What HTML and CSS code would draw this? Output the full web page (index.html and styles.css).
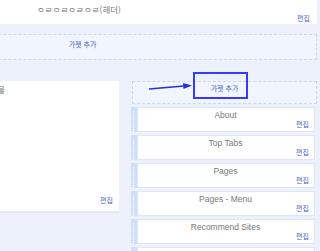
FILE: index.html
```html
<!DOCTYPE html>
<html lang="ko">
<head>
    <meta charset="UTF-8">
    <meta name="viewport" content="width=device-width, initial-scale=1.0">
    <title>레이아웃</title>
    <link rel="stylesheet" href="styles.css">
</head>
<body>

<div class="page">
    <div class="header-box">
        <div class="header-title">ㅇㄹㅇㄹㅇㄹㅇㄹ(헤더)</div>
        <a class="edit">편집</a>
    </div>

    <div class="add-area cross">
        <a class="add-link">가젯 추가</a>
    </div>

    <div class="columns">
        <div class="main-col">
            <div class="main-box">
                <div class="main-title">블로그 게시물</div>
                <a class="edit">편집</a>
            </div>
        </div>

        <div class="side-col">
            <div class="add-area side">
                <a class="add-link">가젯 추가</a>
                <span class="highlight"></span>
                <svg class="arrow" width="46" height="10" viewBox="0 0 46 10">
                    <line x1="1" y1="8" x2="36" y2="5" stroke="#2a2ee0" stroke-width="1.5"/>
                    <polygon points="35,2 44,4.5 35.5,8" fill="#2a2ee0"/>
                </svg>
            </div>

            <div class="widget">
                <div class="handle"></div>
                <div class="widget-box">
                    <div class="widget-title">About</div>
                    <a class="edit">편집</a>
                </div>
            </div>
            <div class="widget">
                <div class="handle"></div>
                <div class="widget-box">
                    <div class="widget-title">Top Tabs</div>
                    <a class="edit">편집</a>
                </div>
            </div>
            <div class="widget">
                <div class="handle"></div>
                <div class="widget-box">
                    <div class="widget-title">Pages</div>
                    <a class="edit">편집</a>
                </div>
            </div>
            <div class="widget">
                <div class="handle"></div>
                <div class="widget-box">
                    <div class="widget-title">Pages - Menu</div>
                    <a class="edit">편집</a>
                </div>
            </div>
            <div class="widget">
                <div class="handle"></div>
                <div class="widget-box">
                    <div class="widget-title">Recommend Sites</div>
                    <a class="edit">편집</a>
                </div>
            </div>
            <div class="widget">
                <div class="handle"></div>
                <div class="widget-box">
                    <div class="widget-title">Recent Comments</div>
                    <a class="edit">편집</a>
                </div>
            </div>
        </div>
    </div>
</div>

</body>
</html>
```

FILE: styles.css
```css
body {
    margin: 0;
    padding: 0;
    background-color: #ecf1fc;
    font-family: 'Liberation Sans', 'Noto Sans CJK KR', sans-serif;
    overflow: hidden;
    width: 320px;
    height: 251px;
}

.page {
    margin-left: -152px;
    width: 469px;
}

.edit {
    display: block;
    text-align: right;
    font-family: 'Noto Sans CJK KR', sans-serif;
    font-size: 7px;
    line-height: 9px;
    color: #4b5fc9;
    cursor: pointer;
}

.header-box {
    height: 24px;
    background-color: #ffffff;
    padding: 5px 7px 0 0;
    box-sizing: border-box;
}

.header-title {
    text-align: center;
    font-family: 'Noto Sans CJK KR', sans-serif;
    font-size: 8.5px;
    line-height: 9px;
    color: #777777;
}

.add-area {
    border: 1px dashed #cad6ee;
    background-color: #f1f5fd;
    box-sizing: border-box;
    text-align: center;
    font-family: 'Noto Sans CJK KR', sans-serif;
    font-size: 7px;
    line-height: 9px;
}

.add-area.cross {
    margin-top: 10px;
    height: 26px;
    padding-top: 5px;
}

.add-link {
    color: #4b5fc9;
    cursor: pointer;
}

.columns {
    display: flex;
    margin-top: 21px;
}

.main-col {
    width: 271px;
}

.main-box {
    height: 130px;
    background-color: #ffffff;
    box-shadow: 0 2px 0 #e2e9f6;
    padding: 3px 6px 0 0;
    box-sizing: border-box;
    display: flex;
    flex-direction: column;
}

.main-title {
    text-align: center;
    font-family: 'Noto Sans CJK KR', sans-serif;
    font-size: 8.5px;
    line-height: 10px;
    color: #777777;
    flex: 1;
}

.main-box .edit {
    margin-bottom: 6px;
}

.side-col {
    width: 186px;
    margin-left: 12px;
}

.add-area.side {
    position: relative;
    margin-left: 1px;
    height: 23px;
    padding-top: 2px;
}

.highlight {
    position: absolute;
    left: 60px;
    top: -10px;
    width: 55px;
    height: 27px;
    border: 2px solid #3838ff;
    box-sizing: border-box;
}

.arrow {
    position: absolute;
    left: 15px;
    top: -1px;
}

.widget {
    display: flex;
    height: 25px;
    margin-top: 3px;
}

.handle {
    width: 6px;
    background-color: #cfe1f8;
    background-image: repeating-linear-gradient(to bottom, #ffffff 0 1px, transparent 1px 2px);
    background-size: 1px 100%;
    background-position: 2px 4px;
    background-repeat: no-repeat;
}

.widget-box {
    flex: 1;
    margin-right: 2px;
    background-color: #ffffff;
    border: 1px solid #dde7f7;
    padding: 2px 5px 0 0;
    box-sizing: border-box;
}

.widget-title {
    text-align: center;
    font-size: 8.5px;
    line-height: 10px;
    color: #777777;
    padding-left: 4px;
}
```
